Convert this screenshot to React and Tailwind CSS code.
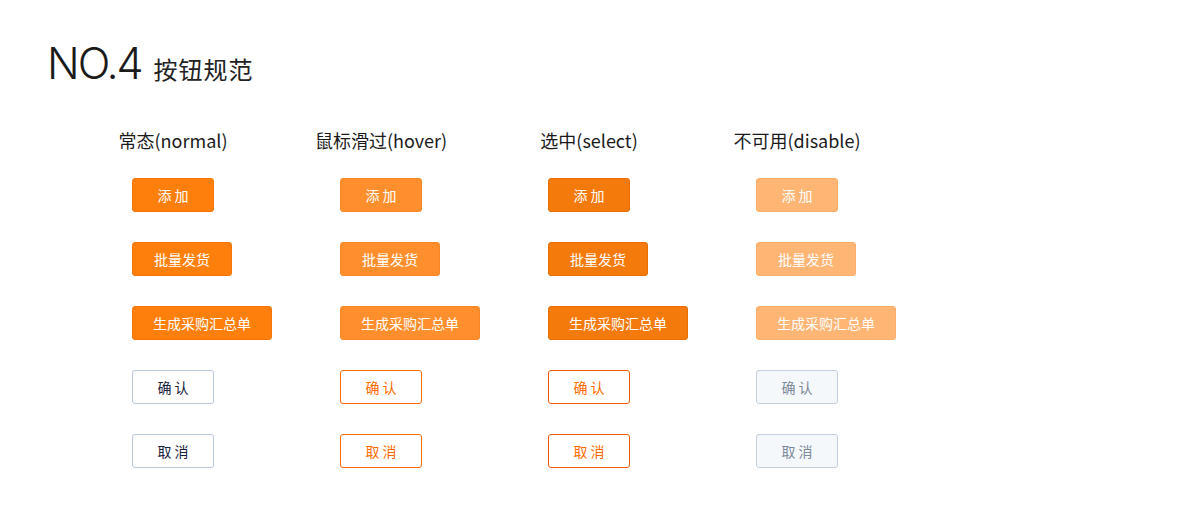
import React from "react";

const cjk = { fontFamily: '"Noto Sans CJK SC", "Noto Sans", sans-serif' };

const variants = {
  normal: {
    solid: "bg-[#ff7f0c] border-[#f7740a] text-white",
    outline: "bg-white border-[#b9c8dc] text-[#17213d]",
  },
  hover: {
    solid: "bg-[#ff8f2d] border-[#f98626] text-white",
    outline: "bg-white border-[#ff6a00] text-[#ff6a00]",
  },
  select: {
    solid: "bg-[#f37a0b] border-[#ea6c05] text-white",
    outline: "bg-white border-[#f05a0c] text-[#ff6a00]",
  },
  disable: {
    solid: "bg-[#ffb574] border-[#ffae69] text-white",
    outline: "bg-[#f5f8fb] border-[#c3cfde] text-[#7d8899]",
  },
};

function Btn({ label, w, kind, v }) {
  const spaced = label.length === 2;
  return (
    <div
      className={`h-[34px] ${w} rounded-[3px] border flex items-center justify-center text-[14px] leading-none ${variants[v][kind]}`}
      style={cjk}
    >
      <span className={spaced ? "tracking-[3px] pl-[3px]" : ""}>{label}</span>
    </div>
  );
}

const columns = [
  { v: "normal", title: "常态(normal)" },
  { v: "hover", title: "鼠标滑过(hover)" },
  { v: "select", title: "选中(select)" },
  { v: "disable", title: "不可用(disable)" },
];

export default function App() {
  return (
    <div className="w-[1200px] h-[518px] bg-white relative overflow-hidden">
      <div className="pl-[47px] pt-[41px] h-[85px] flex items-baseline gap-[12px]">
        <span
          className="text-[43px] leading-[44px] font-light tracking-[-2px] text-[#1b1b1b]"
          style={{ fontFamily: "Inter, sans-serif" }}
        >
          NO.4
        </span>
        <span className="text-[24px] leading-[44px] tracking-[1px] text-[#222]" style={cjk}>
          按钮规范
        </span>
      </div>
      <div className="pl-[132px] mt-[43px] flex">
        {columns.map((c) => (
          <div key={c.v} className="w-[208px] flex flex-col">
            <div className="w-[82px] h-6 flex justify-center whitespace-nowrap">
              <span className="text-[18px] leading-6 text-[#1a1a1a]" style={cjk}>
                {c.title}
              </span>
            </div>
            <div className="mt-[26px] flex flex-col items-start gap-[30px]">
              <Btn label="添加" w="w-[82px]" kind="solid" v={c.v} />
              <Btn label="批量发货" w="w-[100px]" kind="solid" v={c.v} />
              <Btn label="生成采购汇总单" w="w-[140px]" kind="solid" v={c.v} />
              <Btn label="确认" w="w-[82px]" kind="outline" v={c.v} />
              <Btn label="取消" w="w-[82px]" kind="outline" v={c.v} />
            </div>
          </div>
        ))}
      </div>
    </div>
  );
}
